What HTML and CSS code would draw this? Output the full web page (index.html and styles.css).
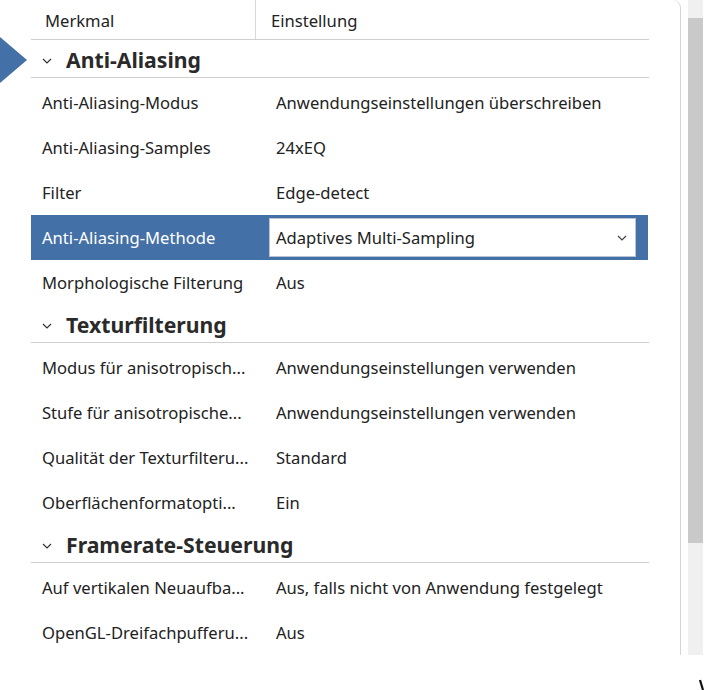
FILE: index.html
```html
<!DOCTYPE html>
<html lang="de">
<head>
<meta charset="utf-8">
<title>Einstellungen</title>
<link rel="stylesheet" href="styles.css">
</head>
<body>
<div class="page">
  <div class="panel">
    <svg class="pointer" width="28" height="48" viewBox="0 0 28 48"><polygon points="0,0 27,23 0,46" fill="#4470a8"/></svg>
    <div class="table">
      <div class="head">
        <div class="hcell first">Merkmal</div>
        <div class="hcell">Einstellung</div>
      </div>

      <div class="section"><svg class="chev" width="10" height="6" viewBox="0 0 10 6"><polyline points="1,1 5,5 9,1" fill="none" stroke="#333" stroke-width="1.2"/></svg><span>Anti-Aliasing</span></div>
      <div class="row"><div class="name">Anti-Aliasing-Modus</div><div class="val">Anwendungseinstellungen überschreiben</div></div>
      <div class="row"><div class="name">Anti-Aliasing-Samples</div><div class="val">24xEQ</div></div>
      <div class="row"><div class="name">Filter</div><div class="val">Edge-detect</div></div>
      <div class="row selected"><div class="name">Anti-Aliasing-Methode</div><div class="combo"><span>Adaptives Multi-Sampling</span><svg class="chev" width="10" height="6" viewBox="0 0 10 6"><polyline points="1,1 5,5 9,1" fill="none" stroke="#444" stroke-width="1.2"/></svg></div></div>
      <div class="row"><div class="name">Morphologische Filterung</div><div class="val">Aus</div></div>

      <div class="section"><svg class="chev" width="10" height="6" viewBox="0 0 10 6"><polyline points="1,1 5,5 9,1" fill="none" stroke="#333" stroke-width="1.2"/></svg><span>Texturfilterung</span></div>
      <div class="row"><div class="name">Modus für anisotropisch...</div><div class="val">Anwendungseinstellungen verwenden</div></div>
      <div class="row"><div class="name">Stufe für anisotropische...</div><div class="val">Anwendungseinstellungen verwenden</div></div>
      <div class="row"><div class="name">Qualität der Texturfilteru...</div><div class="val">Standard</div></div>
      <div class="row"><div class="name">Oberflächenformatopti...</div><div class="val">Ein</div></div>

      <div class="section"><svg class="chev" width="10" height="6" viewBox="0 0 10 6"><polyline points="1,1 5,5 9,1" fill="none" stroke="#333" stroke-width="1.2"/></svg><span>Framerate-Steuerung</span></div>
      <div class="row"><div class="name">Auf vertikalen Neuaufba...</div><div class="val">Aus, falls nicht von Anwendung festgelegt</div></div>
      <div class="row"><div class="name">OpenGL-Dreifachpufferu...</div><div class="val">Aus</div></div>
    </div>
  </div>
  <div class="scrollbar">
    <div class="sb-up"></div>
    <div class="sb-thumb"></div>
    <div class="sb-track"></div>
  </div>
  <svg class="cursor-mark" width="6" height="12" viewBox="0 0 6 12"><path d="M1,1 L4,11" stroke="#111" stroke-width="2.2" fill="none"/></svg>
</div>
</body>
</html>
```

FILE: styles.css
```css
html, body {
  margin: 0;
  padding: 0;
  background: #fff;
}
body {
  font-family: "Noto Sans", "Open Sans", sans-serif;
  color: #222;
  font-size: 16.6px;
}
.page {
  position: relative;
  display: flex;
  align-items: flex-start;
  width: 705px;
  height: 690px;
  overflow: hidden;
}
.panel {
  position: relative;
  width: 649px;
  height: 655px;
  padding-left: 31px;
  border-right: 1px solid #d4d4d4;
  border-top-right-radius: 8px;
  box-sizing: content-box;
  flex: none;
}
.pointer {
  position: absolute;
  left: 0;
  top: 37px;
}
.table {
  width: 618px;
}
.head {
  display: grid;
  grid-template-columns: 225px 1fr;
  height: 40px;
  border-bottom: 1px solid #cfcfcf;
  box-sizing: border-box;
}
.hcell {
  padding-left: 14px;
  padding-top: 9px;
  box-sizing: border-box;
}
.hcell.first {
  border-right: 1px solid #d8d8d8;
}
.hcell + .hcell {
  padding-left: 15px;
}
.section {
  display: flex;
  align-items: center;
  height: 38px;
  margin-bottom: 2px;
  padding-top: 2px;
  border-bottom: 1px solid #cfcfcf;
  padding-left: 11px;
  font-weight: 700;
  font-size: 21.2px;
  color: #2a2a2a;
  box-sizing: border-box;
}
.section .chev {
  margin-right: 14px;
  margin-top: 2px;
}
.row {
  display: grid;
  grid-template-columns: 225px 1fr;
  align-items: center;
  height: 45px;
}
.name {
  padding-left: 11px;
  white-space: nowrap;
}
.val {
  padding-left: 20px;
  white-space: nowrap;
}
.row.selected {
  background: #4470a8;
  margin-right: 1px;
}
.row.selected .name {
  color: #fff;
}
.combo {
  display: flex;
  align-items: center;
  justify-content: space-between;
  height: 39px;
  margin-left: 13px;
  margin-right: 12px;
  padding-left: 6px;
  padding-right: 8px;
  background: #fff;
  border: 1px solid #b8c4d4;
  box-sizing: border-box;
}
.scrollbar {
  display: flex;
  flex-direction: column;
  width: 15px;
  height: 655px;
  margin-left: 7px;
  flex: none;
}
.sb-up {
  height: 18px;
  background: #f0f0f0;
}
.sb-thumb {
  height: 525px;
  background: #c9c9c9;
}
.sb-track {
  flex: 1;
  background: #f0f0f0;
}
.cursor-mark {
  position: absolute;
  left: 699px;
  top: 679px;
}
```
